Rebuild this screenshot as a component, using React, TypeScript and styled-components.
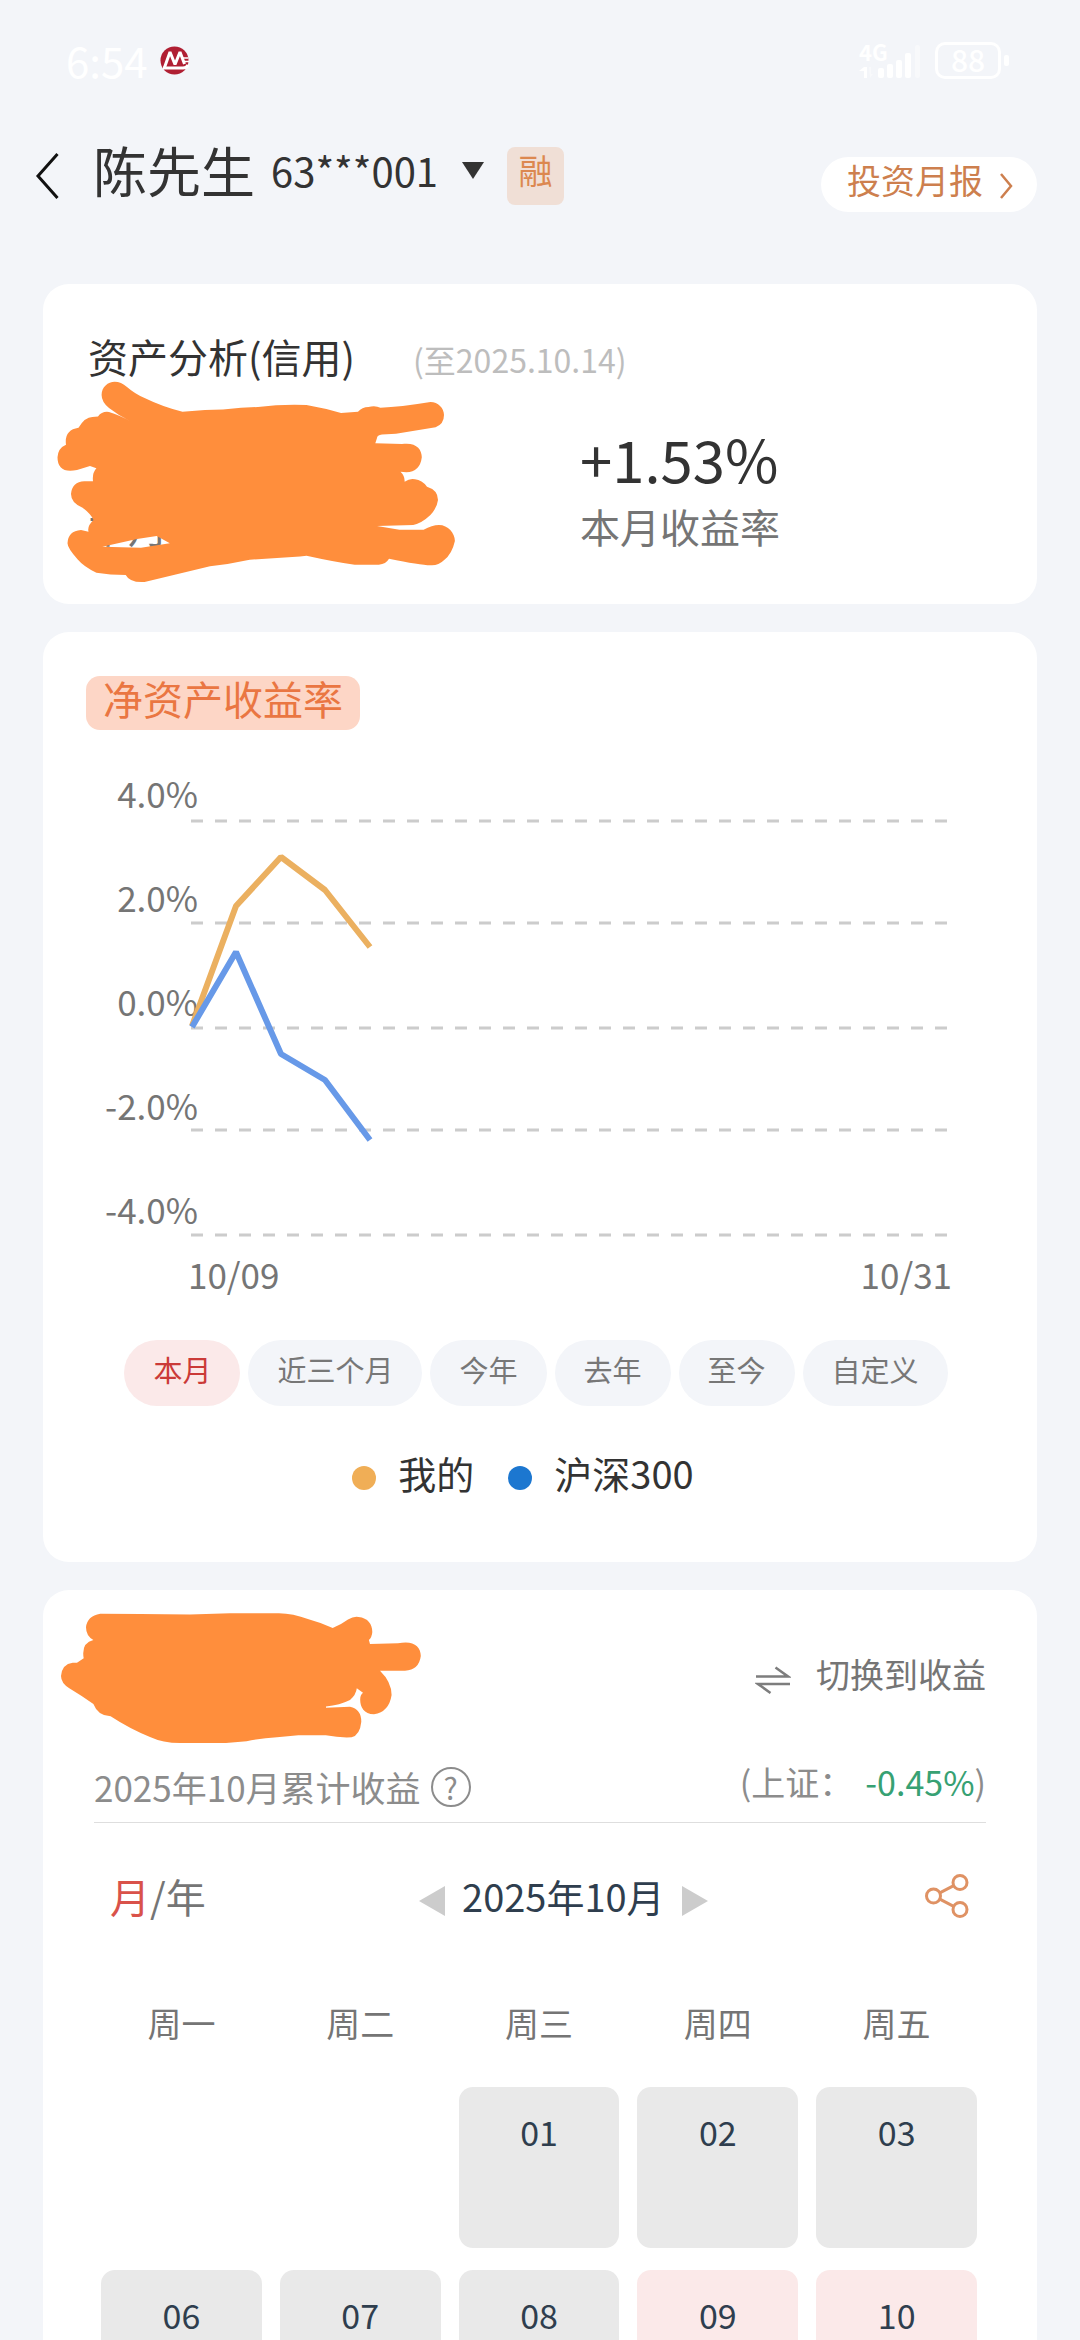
import React, { useState } from "react";
import styled, { createGlobalStyle } from "styled-components";

const GlobalStyle = createGlobalStyle`
  *, *::before, *::after { box-sizing: border-box; }
  body {
    margin: 0;
    background: #f3f5f9;
    color: #333;
    font-family: "Noto Sans CJK SC", "Noto Sans", sans-serif;
  }
  button {
    margin: 0;
    padding: 0;
    border: 0;
    background: none;
    color: inherit;
    font: inherit;
    cursor: pointer;
  }
  a { color: inherit; text-decoration: none; }
  h1, h2, p, dl, dt, dd, ul { margin: 0; padding: 0; font-weight: 400; list-style: none; }
  svg { display: block; flex: none; }
`;

const Screen = styled.div`
  height: 100vh;
  overflow-y: auto;
  scrollbar-width: none;
`;

const StatusBar = styled.div`
  display: flex;
  align-items: center;
  justify-content: space-between;
  height: 120px;
  padding: 0 71px 0 66px;
  color: #fff;
`;

const StatusGroup = styled.div`
  display: flex;
  align-items: center;
  gap: 12px;
`;

const Clock = styled.time`
  font-size: 42px;
  line-height: 60px;
`;

const Battery = styled.div`
  display: flex;
  align-items: center;
  gap: 3px;

  &::after {
    content: "";
    width: 5px;
    height: 11px;
    border-radius: 2px;
    background: #fff;
  }
`;

const BatteryLevel = styled.span`
  width: 66px;
  height: 37px;
  border: 3px solid #fff;
  border-radius: 10px;
  font-size: 30px;
  font-weight: 500;
  line-height: 28px;
  text-align: center;
`;

const Header = styled.header`
  display: flex;
  align-items: flex-start;
  height: 164px;
  padding: 27px 43px 0 35px;
`;

const BackButton = styled.button`
  display: flex;
  align-items: center;
  width: 58px;
  height: 58px;
`;

const AccountButton = styled.button`
  display: flex;
  align-items: center;
  height: 46px;
`;

const OwnerName = styled.span`
  margin-right: 16px;
  font-size: 54px;
  line-height: 46px;
`;

const AccountNo = styled.span`
  margin-right: 24px;
  font-size: 40px;
  line-height: 46px;
`;

const MarginTag = styled.span`
  width: 57px;
  height: 58px;
  margin-left: 23px;
  border-radius: 8px;
  background: #f0dfd6;
  color: #dc8850;
  font-size: 34px;
  line-height: 46px;
  text-align: center;
`;

const ReportLink = styled.a`
  display: flex;
  gap: 16px;
  height: 55px;
  margin: 10px 0 0 auto;
  padding: 0 24px 0 26px;
  border-radius: 28px;
  background: #fff;
  color: #cd7f4e;
  font-size: 34px;
  line-height: 46px;
`;

const Main = styled.main`
  display: flex;
  flex-direction: column;
  gap: 28px;
  padding: 0 43px 28px;
`;

const Card = styled.section`
  position: relative;
  border-radius: 26px;
  background: #fff;
`;

const AssetCard = styled(Card)`
  padding: 42px 47px 48px 45px;
`;

const ReturnCard = styled(Card)`
  padding: 44px 43px 61px;
`;

const CalendarCard = styled(Card)`
  padding: 52px 51px 48px;
`;

const Scribble = styled.svg`
  position: absolute;
  fill: #ff8e3c;
`;

const AssetScribble = styled(Scribble)`
  top: 96px;
  left: 7px;
`;

const IncomeScribble = styled(Scribble)`
  top: 20px;
  left: 12px;
`;

const AssetHeading = styled.div`
  display: flex;
  align-items: baseline;
  gap: 58px;
  margin-bottom: 33px;
`;

const AssetTitle = styled.h1`
  font-size: 40px;
  line-height: 60px;
`;

const AsOf = styled.span`
  color: #bdbdbd;
  font-size: 32px;
  line-height: 60px;
`;

const Stats = styled.div`
  display: grid;
  grid-template-columns: 6fr 5fr;
  align-items: end;
`;

const Stat = styled.div`
  display: flex;
  flex-direction: column;
  gap: 2px;
`;

const StatValue = styled.strong`
  font-size: 58px;
  font-weight: 400;
  line-height: 72px;
`;

const StatLabel = styled.span`
  color: #757575;
  font-size: 40px;
  line-height: 60px;
`;

const ChartTag = styled.h2`
  width: fit-content;
  height: 54px;
  padding: 0 17px;
  border-radius: 14px;
  background: #fdd6c6;
  color: #ea7642;
  font-size: 40px;
  line-height: 44px;
`;

const Chart = styled.svg`
  width: 100%;
  height: auto;
  margin-top: 10px;
  fill: #757575;
  font-size: 35px;
`;

const Ranges = styled.div`
  display: flex;
  justify-content: center;
  margin-top: 40px;
`;

const RangeButton = styled.button<{ $active: boolean }>`
  height: 66px;
  margin-right: 8px;
  padding: 0 29px 8px;
  border-radius: 33px;
  background: ${(p) => (p.$active ? "#fbe9e9" : "#f3f5f9")};
  color: ${(p) => (p.$active ? "#cb3a38" : "#777")};
  font-size: 29px;
  line-height: 58px;
`;

const Legend = styled.ul`
  display: flex;
  justify-content: center;
  margin-top: 39px;
`;

const LegendItem = styled.li<{ $color: string }>`
  display: flex;
  align-items: center;
  gap: 22px;
  margin-right: 34px;
  font-size: 38px;
  line-height: 56px;

  &::before {
    content: "";
    width: 24px;
    height: 24px;
    margin-top: 10px;
    border-radius: 50%;
    background: ${(p) => p.$color};
  }
`;

const SwitchButton = styled.button`
  display: flex;
  align-items: center;
  gap: 25px;
  margin-left: auto;
  color: #757575;
  font-size: 34px;
  line-height: 64px;

  svg { margin-top: 12px; }
`;

const Summary = styled.div`
  display: flex;
  justify-content: space-between;
  align-items: flex-start;
  height: 67px;
  margin-top: 50px;
  border-bottom: 1px solid #dedede;
  color: #8c8c8c;
  font-size: 34px;
`;

const SummaryTitle = styled.p`
  display: flex;
  align-items: center;
  gap: 10px;
  font-size: 35px;
  line-height: 62px;
`;

const HelpButton = styled.button`
  width: 40px;
  height: 40px;
  border: 2px solid #8c8c8c;
  border-radius: 50%;
  font-size: 30px;
  line-height: 34px;
`;

const IndexChange = styled.p`
  line-height: 52px;
`;

const Down = styled.span`
  margin-left: 12px;
  color: #37a173;
`;

const MonthBar = styled.div`
  display: flex;
  align-items: center;
  justify-content: space-between;
  margin-top: 43px;
  padding: 0 17px 0 16px;
  line-height: 60px;
`;

const UnitSwitch = styled.div`
  color: #757575;
  font-size: 40px;
`;

const UnitButton = styled.button<{ $active: boolean }>`
  color: ${(p) => (p.$active ? "#d9524a" : "#757575")};
`;

const MonthPicker = styled.div`
  display: flex;
  align-items: center;
  gap: 17px;
  margin-right: 4px;
  color: #2f3e4e;
  font-size: 38px;

  button { padding-top: 10px; }
`;

const WeekGrid = styled.div`
  display: grid;
  grid-template-columns: repeat(5, 1fr);
  gap: 22px 18px;
  padding: 0 9px 0 7px;
`;

const Weekdays = styled(WeekGrid)`
  margin: 67px 0 34px;
  color: #757575;
  font-size: 34px;
  line-height: 60px;
  text-align: center;
`;

const DayButton = styled.button<{ $gain: boolean; $column: number }>`
  display: flex;
  justify-content: center;
  grid-column: ${(p) => p.$column};
  aspect-ratio: 1;
  padding-top: 20px;
  border-radius: 14px;
  background: ${(p) => (p.$gain ? "#fbe9e9" : "#e9e9e9")};
  color: #2f3e4e;
  font-size: 34px;
  line-height: 50px;
`;

const RANGES = ["本月", "近三个月", "今年", "去年", "至今", "自定义"];

const AXIS = [
  { label: "4.0%", line: 81 },
  { label: "2.0%", line: 183 },
  { label: "0.0%", line: 288 },
  { label: "-2.0%", line: 390 },
  { label: "-4.0%", line: 495 },
];

const DAYS = [
  { day: "01", column: 3, gain: false },
  { day: "02", column: 4, gain: false },
  { day: "03", column: 5, gain: false },
  { day: "06", column: 1, gain: false },
  { day: "07", column: 2, gain: false },
  { day: "08", column: 3, gain: false },
  { day: "09", column: 4, gain: true },
  { day: "10", column: 5, gain: true },
];

const BankLogo = () => (
  <svg width="29" height="29" viewBox="0 0 29 29" aria-hidden="true">
    <circle cx="14.5" cy="14.5" r="14" fill="#b01f33" />
    <g fill="none" stroke="#fff">
      <path d="M4.500 21.500 10 6 15 18.500 20 6 24.500 18" strokeWidth="3" strokeLinejoin="bevel" />
      <path d="M3 22H23Q26.500 22 28 19" strokeWidth="3" />
      <path d="M23 12H28.500M24 15.500H29" strokeWidth="1.500" />
    </g>
  </svg>
);

const Signal = () => (
  <svg width="64" height="57" viewBox="0 -10 64 57" fill="#fff" aria-hidden="true">
    <text x="0" y="19" fontSize="22" fontWeight="700">4G</text>
    <path d="M0 29 5 25H8V36H5V29Z" />
    <path d="M10 25H12V32H14L11 36Z" opacity="0.4" />
    <rect x="19" y="26" width="6" height="10" rx="2" />
    <rect x="28" y="22" width="6" height="14" rx="2" />
    <rect x="37" y="18" width="6" height="18" rx="2" />
    <rect x="46" y="11" width="6" height="25" rx="2" />
    <rect x="56" y="3" width="5" height="33" rx="2" opacity="0.4" />
  </svg>
);

const ShareIcon = () => (
  <svg width="44" height="46" viewBox="0 0 44 46" fill="none" stroke="#df9264" strokeWidth="3" aria-hidden="true">
    <circle cx="8.500" cy="23" r="7" />
    <circle cx="35" cy="9.500" r="7" />
    <circle cx="35" cy="36.500" r="7" />
    <path d="M14.800 19.800 28.700 12.700M14.800 26.200 28.700 33.300" />
  </svg>
);

const SwapIcon = () => (
  <svg width="36" height="28" viewBox="0 0 36 28" fill="none" stroke="#7d7d7d" strokeWidth="2.500" aria-hidden="true">
    <path d="M1 10.500H33L20.500 1.500M35 18H3L15.500 27" />
  </svg>
);

const Arrow = ({ d }: { d: string }) => (
  <svg width="26" height="30" viewBox="0 0 26 30" fill="#ccc" aria-hidden="true">
    <path d={d} />
  </svg>
);

export default function App() {
  const [range, setRange] = useState("本月");
  const [unit, setUnit] = useState("月");

  return (
    <Screen>
      <GlobalStyle />
      <StatusBar>
        <StatusGroup>
          <Clock>6:54</Clock>
          <BankLogo />
        </StatusGroup>
        <StatusGroup>
          <Signal />
          <Battery>
            <BatteryLevel>88</BatteryLevel>
          </Battery>
        </StatusGroup>
      </StatusBar>

      <Header>
        <BackButton aria-label="返回">
          <svg width="24" height="46" viewBox="0 0 24 46" fill="none" stroke="#111" strokeWidth="3" aria-hidden="true">
            <path d="M22.500 1 3 23 22.500 45" />
          </svg>
        </BackButton>
        <AccountButton>
          <OwnerName>陈先生</OwnerName>
          <AccountNo>63***001</AccountNo>
          <svg width="22" height="17" viewBox="0 0 22 17" fill="#333" aria-hidden="true">
            <path d="M0 0H22L11 17Z" />
          </svg>
        </AccountButton>
        <MarginTag>融</MarginTag>
        <ReportLink href="#report">
          投资月报
          <svg width="14" height="46" viewBox="0 0 14 46" fill="none" stroke="#cd7f4e" strokeWidth="2.500" aria-hidden="true">
            <path d="M2 17 12 29 2 41" />
          </svg>
        </ReportLink>
      </Header>

      <Main>
        <AssetCard>
          <AssetHeading>
            <AssetTitle>资产分析(信用)</AssetTitle>
            <AsOf>(至2025.10.14)</AsOf>
          </AssetHeading>
          <Stats>
            <StatLabel>本月</StatLabel>
            <Stat>
              <StatValue>+1.53%</StatValue>
              <StatLabel>本月收益率</StatLabel>
            </Stat>
          </Stats>
          <AssetScribble width="420" height="210" viewBox="50 380 420 210" aria-hidden="true">
            <path
              fillRule="evenodd"
              d="M101.600 395C101.600 387 108 381.700 114.700 381.700Q121 381.700 127 387Q135 394 144.600 398Q163 407 182.500 411.700L205 410Q223 410 241 407.700L258 407Q282 404 306.500 405Q324 408 341 413L358 411.700Q362 407 368.500 407Q375 405 380.500 407.700Q400 407 430.500 402C438 402 444 408 444 415Q444 424 435.600 427.300L396 433.700L382 434.500Q377 435 377 438L375.300 443.300L402 444C416 442 421.800 449 421.800 457.300Q420 472 406.300 472.300L400.500 471.700Q405 476 404.600 481.700Q410 478 415 479.300Q422 480 427 486.700Q438 490 438 500Q437 508 430.400 515Q422 523 413.200 525L377 526L399.400 529.700H423.600Q432 525 439 525C448 525 454.900 533 454.900 541Q452 554 444.200 560Q438 566 430.400 565.300Q420 565 389 558.700Q386 564 378.800 564.700H354.700Q335 562 306.500 555.700L300 556.500L249.700 559.700Q230 564 210 566.300L144.600 582Q130 583 125.700 575Q110 575 96.400 572.700Q84 567 77.500 559.300Q67.500 548 67.500 543.300Q68 531 81 530L88.500 531.700Q87 526 93.500 520Q91 514 82.600 507.700Q71 503 71 494Q72 482 84.400 481.300H93Q92 473 96.400 468.300L90 466L77 470Q57.500 474 57.500 457.300Q58 448 66 444.700Q64 430 78.500 427.700Q85 417 92.300 417L98 416.500Q102 411 109 412Q119 415 131.500 421.700Q119 416 109 408Q101.600 402 101.600 395ZM102.300 546.700 137 539 156.700 536Q164 540 169.800 543.300L141 547.700Z"
            />
          </AssetScribble>
        </AssetCard>

        <ReturnCard>
          <ChartTag>净资产收益率</ChartTag>
          <Chart viewBox="0 0 908 560" role="img" aria-label="净资产收益率">
            {AXIS.map(({ label, line }, i) => (
              <g key={label}>
                <text x="112" y={68 + i * 104} textAnchor="end">{label}</text>
                <path d={`M105 ${line}H862`} stroke="#ccc" strokeWidth="3" strokeDasharray="12 12" />
              </g>
            ))}
            <text x="102" y="549">10/09</text>
            <text x="866" y="549" textAnchor="end">10/31</text>
            <g fill="none" strokeWidth="6" strokeLinejoin="bevel">
              <path d="M106 286 150 166 195 117 239 150 284 207" stroke="#ebb060" />
              <path d="M106 287 150 212 195 314 239 340 284 400" stroke="#6799e8" />
            </g>
          </Chart>
          <Ranges>
            {RANGES.map((name) => (
              <RangeButton key={name} $active={name === range} onClick={() => setRange(name)}>
                {name}
              </RangeButton>
            ))}
          </Ranges>
          <Legend>
            <LegendItem $color="#f0ae56">我的</LegendItem>
            <LegendItem $color="#1c77d0">沪深300</LegendItem>
          </Legend>
        </ReturnCard>

        <CalendarCard>
          <SwitchButton>
            <SwapIcon />
            切换到收益
          </SwitchButton>
          <Summary>
            <SummaryTitle>
              2025年10月累计收益
              <HelpButton aria-label="说明">?</HelpButton>
            </SummaryTitle>
            <IndexChange>
              (上证：<Down>-0.45%</Down>)
            </IndexChange>
          </Summary>
          <MonthBar>
            <UnitSwitch>
              <UnitButton $active={unit === "月"} onClick={() => setUnit("月")}>月</UnitButton>/
              <UnitButton $active={unit === "年"} onClick={() => setUnit("年")}>年</UnitButton>
            </UnitSwitch>
            <MonthPicker>
              <button aria-label="上个月"><Arrow d="M26 0V30L0 15Z" /></button>
              2025年10月
              <button aria-label="下个月"><Arrow d="M0 0V30L26 15Z" /></button>
            </MonthPicker>
            <button aria-label="分享"><ShareIcon /></button>
          </MonthBar>
          <Weekdays>
            {["周一", "周二", "周三", "周四", "周五"].map((name) => (
              <span key={name}>{name}</span>
            ))}
          </Weekdays>
          <WeekGrid>
            {DAYS.map(({ day, column, gain }) => (
              <DayButton key={day} $column={column} $gain={gain}>{day}</DayButton>
            ))}
          </WeekGrid>
          <IncomeScribble width="370" height="140" viewBox="55 1610 370 140" aria-hidden="true">
            <path d="M100.300 1613.700 140 1614 190 1614.500 230 1613.300H277.600Q292 1613 308.600 1619.300Q322 1623 332.700 1628Q342 1624 348 1619.500Q354 1616 358.500 1617C368 1618 372.300 1624 372.300 1632Q372 1637 368.900 1640L370 1644 398 1643.300C413 1640 420.800 1646 420.800 1656Q419 1670 405 1670.700H380Q391.600 1682 391.600 1695Q389 1712 374 1714.300C364 1714 360.200 1707 360.200 1700Q360 1695 363 1692.700L356.800 1688.300Q356 1695 350 1700Q340 1705 326 1706.500V1707.700L350 1706.700Q361.300 1709 361.300 1721.700Q360 1735 351.600 1737.300Q340 1738 325.800 1735.300H298.300L277 1737.300Q262 1738 246.600 1741.300L226 1743H180Q163 1743 150 1737Q130 1729 110.600 1716.300Q98 1716 93.400 1704Q82 1696 69.300 1688.300Q61 1683 61 1676Q62 1664 72.700 1662.700H77L83.700 1658.300Q81 1643 93.400 1640Q86 1636 86 1627.300Q87 1616 100.300 1613.700Z" />
          </IncomeScribble>
        </CalendarCard>
      </Main>
    </Screen>
  );
}
